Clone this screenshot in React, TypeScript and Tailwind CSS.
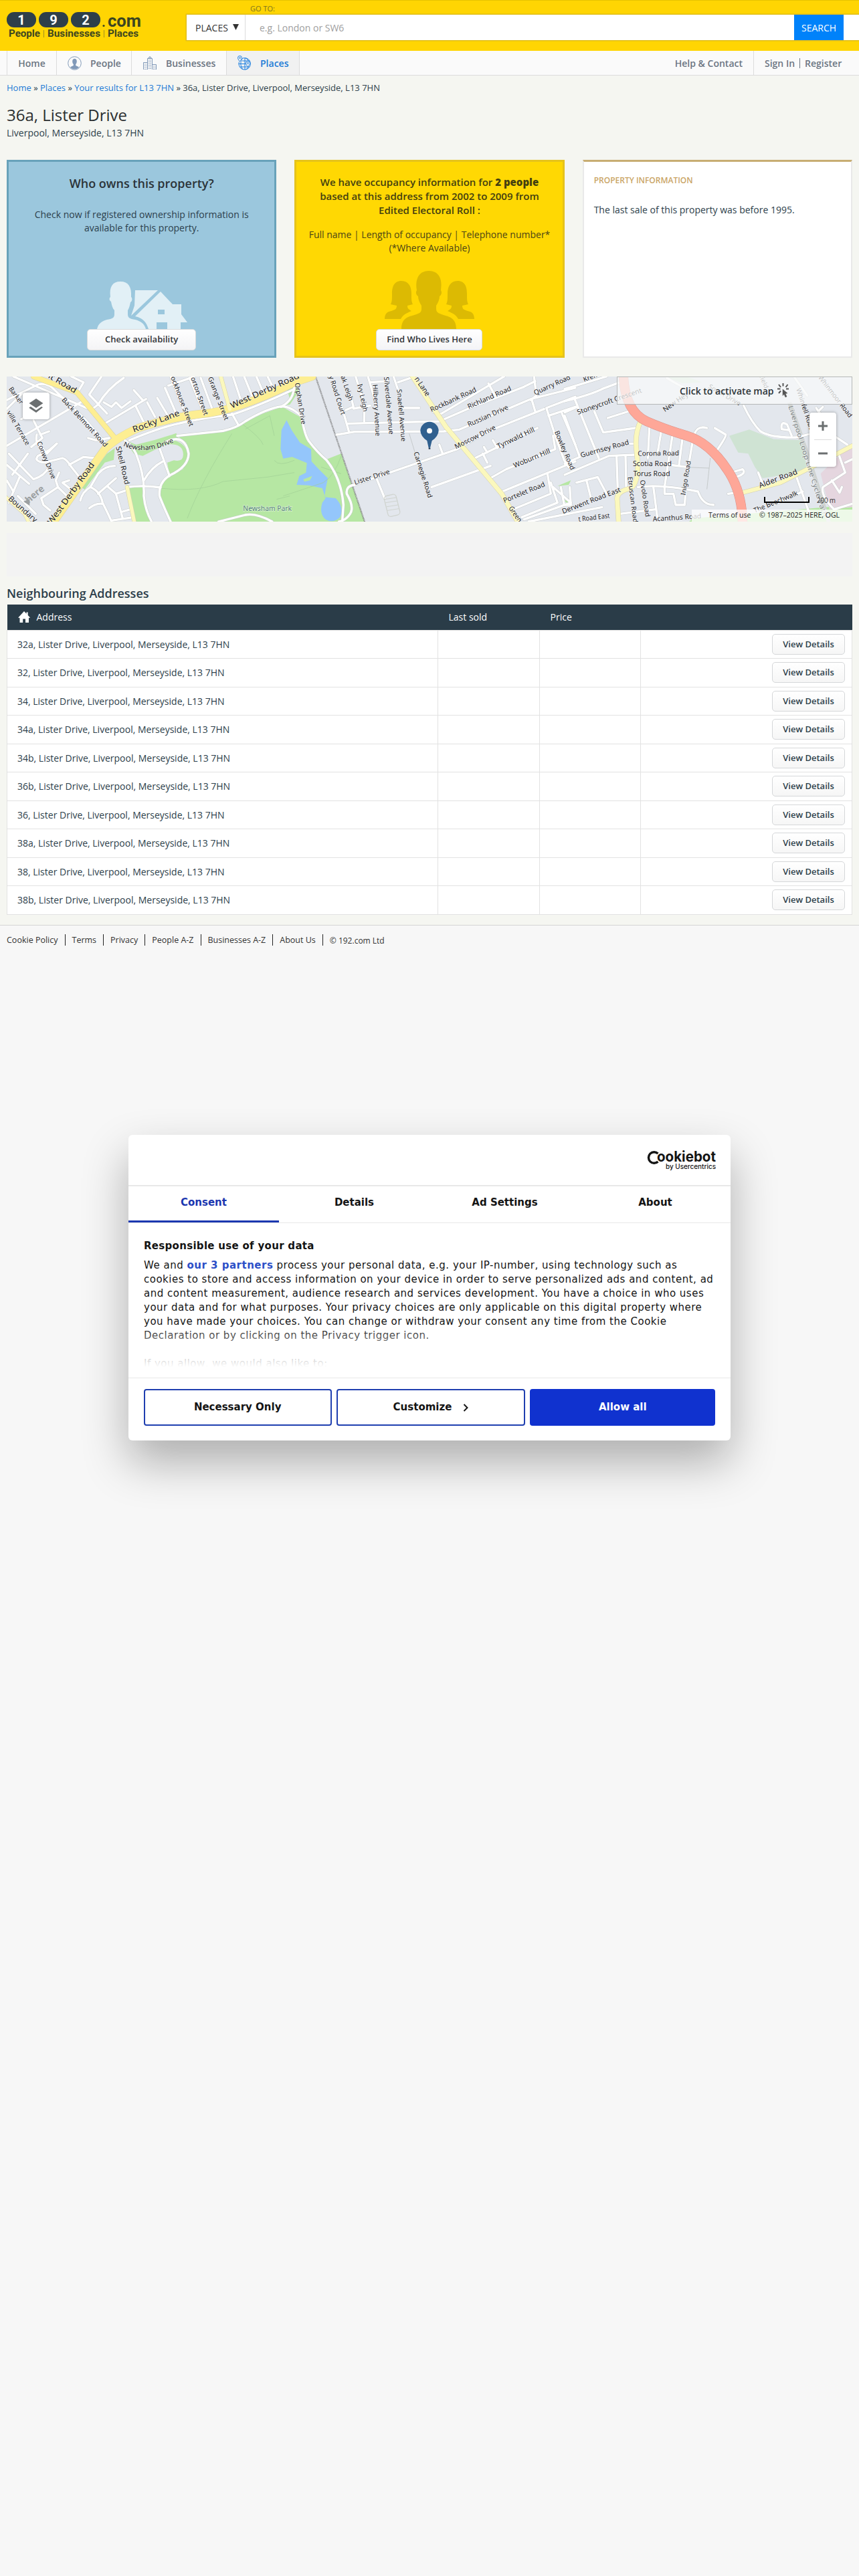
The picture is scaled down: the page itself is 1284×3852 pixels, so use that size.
import { ReactNode } from 'react'

const addresses = ['32a', '32', '34', '34a', '34b', '36b', '36', '38a', '38', '38b']

const footerLinks = ['Cookie Policy', 'Terms', 'Privacy', 'People A-Z', 'Businesses A-Z', 'About Us']

function Logo() {
  return (
    <div className="ml-[10px] mt-[17px] w-[205px] font-['Roboto'] font-bold">
      <div className="flex h-[24px] items-start">
        <div className="flex gap-[4px]">
          {['1', '9', '2'].map((n) => (
            <span key={n} className="flex h-[23px] w-[44px] items-center justify-center rounded-[11px] bg-[#2e3f4a] text-[20px] leading-none text-white">
              {n}
            </span>
          ))}
        </div>
        <svg width="62" height="30" className="ml-[2px] overflow-visible" fill="#3c4620">
          <circle cx="3" cy="20.500" r="1.600" />
          <text x="9" y="22" fontSize="25" textLength="50" lengthAdjust="spacingAndGlyphs">com</text>
        </svg>
      </div>
      <svg width="205" height="18" className="block overflow-visible" fontSize="14" fill="#3c4620">
        <text x="3" y="13" textLength="47" lengthAdjust="spacingAndGlyphs">People</text>
        <text x="61" y="13" textLength="79" lengthAdjust="spacingAndGlyphs">Businesses</text>
        <text x="151" y="13" textLength="46" lengthAdjust="spacingAndGlyphs">Places</text>
        <path d="M55.500 3v11M145.500 3v11" stroke="#a08f20" />
      </svg>
    </div>
  )
}

function Header() {
  return (
    <header className="flex h-[76px] overflow-hidden border-t border-[#e6c200] bg-[#ffd503] shadow-[0_1px_0_#cdb96a]">
      <Logo />
      <div className="ml-[64px] flex-1">
        <div className="ml-[95px] mt-[3px] text-[11px] leading-[18px] text-[#7c7222]">GO TO:</div>
        <div className="flex h-[38px] bg-white text-[15px] shadow-[0_0_0_1.5px_#e0bd1c]">
          <div className="flex w-[88px] items-center border-r border-[#dddddd] pl-[13px] text-[14px] text-[#333]">
            PLACES
            <svg width="9" height="10" className="ml-[7px]"><path d="M0 0h9L4.500 9z" fill="#333" /></svg>
          </div>
          <div className="flex flex-1 items-center pl-[21px] text-[14px] text-[#a0a0a0]">e.g. London or SW6</div>
          <button className="mr-[23px] w-[74px] bg-[#0082fa] text-[14px] text-white">SEARCH</button>
        </div>
      </div>
    </header>
  )
}

function PeopleIcon() {
  return (
    <svg width="21" height="21" viewBox="0 0 21 21" className="mr-[13px]">
      <circle cx="10.500" cy="10.500" r="9.800" fill="none" stroke="#8199b8" />
      <path d="M7.200 7.500c0-5 6.600-5 6.600 0 0 2-.7 3.800-1.600 4.600v2l4.800 2.200c-3 4.300-10 4.300-13 0l4.800-2.200v-2C7.800 11.300 7.200 9.500 7.200 7.500z" fill="#8199b8" />
    </svg>
  )
}

function BusinessIcon() {
  return (
    <svg width="21" height="21" viewBox="0 0 21 21" className="mr-[13px]" fill="none" stroke="#8199b8">
      <path d="M6.500 20V3.500h7V20M8 3.500v-1.500h4v1.500M10 2V0M.5 20V9.500h6M13.500 12.500h6V20" />
      <path d="M8 6h4M8 8.500h4M8 11h4M8 13.500h4M8 16h4M8 18.500h4M2 12h3.500M2 14.500h3.500M2 17h3.500M2 19.500h3.500M15 15h3.500M15 17.500h3.500M15 19.500h3.500" strokeDasharray="1.500 1" />
    </svg>
  )
}

function PlacesIcon() {
  return (
    <svg width="21" height="22" viewBox="0 0 21 22" className="mr-[13px]" fill="none" stroke="#1c7fe0">
      <path d="M7 4.500A8.700 8.700 0 1 1 2.500 9.500M7 4.800c-3 5-3 11 1 16M11 4v17M12 4c3 1 4 3 4.500 5M12.500 21c2-1 3-3 3.800-5M1.500 12.500h11M3.500 17h14.500M7 8h11" />
      <path d="M3.500 9C1.500 6.500.5 5 .5 3.500a3 3 0 0 1 6 0C6.500 5 5.500 6.500 3.500 9z" fill="#f1f1f1" />
      <circle cx="3.500" cy="3.500" r="1" />
      <path d="M15.500 17c-2-2.500-3-4-3-5.500a3 3 0 0 1 6 0c0 1.500-1 3-3 5.500z" fill="#f1f1f1" />
      <circle cx="15.500" cy="11.500" r="1" />
    </svg>
  )
}

function Nav() {
  return (
    <nav className="flex h-[37px] items-stretch border-b border-[#dcdcdc] bg-[#fafafa] pl-[10px] text-[14px] font-semibold text-[#6c7683]">
      <a className="flex w-[74px] items-center justify-center border-l border-[#dcdcdc]">Home</a>
      <a className="flex w-[112px] items-center border-l border-[#dcdcdc] pl-[16px]"><PeopleIcon />People</a>
      <a className="flex w-[142px] items-center border-l border-[#dcdcdc] pl-[17px]"><BusinessIcon />Businesses</a>
      <a className="flex w-[110px] items-center border-x border-[#dcdcdc] bg-[#f1f1f1] pl-[16px] text-[#1c7bd6]"><PlacesIcon />Places</a>
      <div className="ml-auto flex items-center pr-[16px]">Help &amp; Contact</div>
      <div className="flex w-[158px] items-center border-l border-[#dcdcdc] pl-[16px]">
        Sign In
        <span className="mx-[7px] h-[15px] w-px bg-[#6c7683]" />
        Register
      </div>
    </nav>
  )
}

function Breadcrumb() {
  return (
    <div className="mt-[9px] whitespace-nowrap text-[13px] font-medium leading-[18px] text-[#2c3e4a]">
      <a className="text-[#1c7bd6]">Home</a> <span className="font-normal">»</span> <a className="text-[#1c7bd6]">Places</a>{' '}
      <span className="font-normal">»</span> <a className="text-[#1c7bd6]">Your results for L13 7HN</a>{' '}
      <span className="font-normal">»</span> 36a, Lister Drive, Liverpool, Merseyside, L13 7HN
    </div>
  )
}

function CardButton({ children, className }: { children: ReactNode; className: string }) {
  return (
    <button className={`h-[32px] rounded-[5px] border border-[#d8dadb] bg-linear-to-b from-white to-[#f4f4f6] text-[13px] font-semibold text-[#303438] ${className}`}>
      {children}
    </button>
  )
}

function Cards() {
  return (
    <div className="mt-[31px] grid grid-cols-3 gap-[27px] text-[14px]">
      <section className="flex h-[296px] flex-col items-center border-[3px] border-[#68a2ba] bg-[#9bc7dd] pb-[8px] pt-[20px] text-center">
        <h2 className="text-[18px] font-semibold leading-[24px] text-[#2b3338]">Who owns this property?</h2>
        <p className="mt-[25px] px-[30px] leading-[20px] text-[#2c404c]">Check now if registered ownership information is<br />available for this property.</p>
        <svg width="136" height="71" viewBox="0 0 136 71" className="mt-auto ml-[2px]" fill="#e2f0f6">
          <path d="M0 71c2-9 8-12 15-14 8-1 11-3 11-8v-6c-3-3-4-8-5-13-3-2-3-5-1-7C18 8 23 0 35 0s17 8 16 23c2 2 2 6-1 8-1 5-2 9-4 12v6c0 5 3 7 11 8 8 2 14 6 16 14z" />
          <path d="M57 13h34L51 51l5-15z" />
          <path d="M95 15l18 19h13v15l9 12h-10v10h-20V61H89v10H77c-3-10-9-17-20-19z" />
          <path d="M91 42h10v7H91z" fill="#9bc7dd" />
        </svg>
        <CardButton className="w-[163px]">Check availability</CardButton>
      </section>
      <section className="flex h-[296px] flex-col items-center border-[3px] border-[#e6c31b] bg-[#ffd803] pb-[8px] pt-[20px] text-center text-[#4b4416]">
        <h2 className="whitespace-nowrap text-[15px] font-semibold leading-[21px] text-[#443f10]">
          We have occupancy information for <b className="font-extrabold">2 people</b><br />based at this address from 2002 to 2009 from<br />Edited Electoral Roll :
        </h2>
        <p className="mt-[16px] leading-[20px]">Full name | Length of occupancy | Telephone number*<br />(*Where Available)</p>
        <svg width="134" height="87" viewBox="0 0 134 87" className="mt-auto" fill="#dcba03">
          <path d="M25 87c0-14 8-18 16-20 10-3 14-4 14-10v-5c-3-5-5-9-5-14-3-2-4-6-2-9C45 11 52 0 66 0s21 11 18 29c2 3 1 7-2 9 0 5-2 9-5 14v5c0 6 5 7 14 10 8 2 16 6 16 20z" />
          <path d="M0 72c0-9 5-11 10-12 6-2 8-3 8-8l-9-2c2-4 2-7 2-16 0-10 3-19 14-19s15 9 15 19c0 9 0 12 2 16l-8 2c0 4 1 5 6 8-8 4-11 4-16 12z" />
          <path d="M134 72c0-9-5-11-10-12-6-2-8-3-8-8l9-2c-2-4-2-7-2-16 0-10-3-19-14-19S94 24 94 34c0 9 0 12-2 16l8 2c0 4-1 5-6 8 8 4 11 4 16 12z" />
        </svg>
        <CardButton className="w-[159px]">Find Who Lives Here</CardButton>
      </section>
      <section className="h-[296px] border-2 border-t-[3px] border-[#e9e9e9] border-t-[#c8ad72] bg-white px-[15px] pt-[19px]">
        <h2 className="text-[12px] font-semibold leading-[18px] text-[#caa566]">PROPERTY INFORMATION</h2>
        <p className="mt-[25px] leading-[20px] text-[#2c3e4a]">The last sale of this property was before 1995.</p>
      </section>
    </div>
  )
}

// The map is drawn in thirds of a pixel
const minorRoads = [
  // west
  'M30 130L170 60Q205 50 235 75L380 215L470 320', 'M30 335L370 135', 'M100 100L30 170', 'M95 215L150 190M150 220L190 300L140 340M180 285L220 270',
  'M60 24L400 170', 'M320 24L375 50L345 100', 'M555 30Q480 80 440 150L420 165', 'M455 24L400 105L480 190', 'M465 140L500 160L520 140L545 165L585 135',
  'M470 235L655 125M600 85L640 130', 'M610 160L645 230', 'M660 140L695 205', 'M705 120L750 195', 'M740 75L790 190', 'M755 65L870 25',
  'M765 24L830 190', 'M850 30L910 180', 'M900 30L950 165', 'M1045 24L1080 130', 'M1095 24L1130 110', 'M1150 24L1180 95', 'M1200 24L1225 75',
  'M30 420L130 505M125 370L55 465M40 370L150 485Q200 470 220 430M60 540L90 470', 'M165 285Q155 330 190 345L210 370L255 325', 'M255 325L220 355L170 380Q150 405 200 410L280 390Q300 395 320 430L360 480',
  'M310 420L375 385L425 390', 'M265 455L250 490L260 520L185 570L195 600L225 625', 'M260 520L300 560M310 490L280 500L330 540', 'M80 560L160 640M30 490L60 540L40 590',
  'M515 425Q470 425 440 460L405 520Q370 540 360 580', 'M405 520Q450 540 460 590Q490 650 500 675', 'M520 480L440 550M480 515L520 550L565 535M520 550L550 660M460 595Q430 590 400 615M500 670L600 655M550 630L585 620',
  'M570 520Q640 510 720 522', 'M645 490Q680 430 730 405', 'M715 345L760 470', 'M560 310Q590 330 610 370Q650 470 645 560Q650 620 680 675', 'M395 300L430 310L490 300',
  // round the park
  'M580 310Q700 260 780 240Q900 210 1040 195Q1150 160 1320 80', 'M795 290L1000 268Q1060 255 1100 225Q1200 165 1265 158Q1310 160 1360 210', 'M1040 190L1070 243',
  'M750 315Q830 280 846 370Q845 430 760 468Q710 500 715 560Q730 600 765 675', 'M980 675L1100 645Q1150 635 1220 675', 'M1260 160Q1320 130 1320 60',
  'M1355 220Q1370 300 1390 320Q1420 360 1465 400Q1530 480 1540 600L1535 670', 'M1590 510Q1550 515 1555 550Q1590 610 1570 640Q1550 670 1520 675',
  // centre
  'M1590 510L2050 350L2200 265L2440 170', 'M1510 285L1590 272L1990 270L2060 262L2380 125L2580 75', 'M1560 235L1970 225L2120 160L2350 70L2400 45', 'M1940 180Q1960 195 1980 190L2260 24', 'M2190 55L2220 110',
  'M1530 150L1565 272', 'M1570 100L1585 160L1550 175M1585 168L1660 155', 'M1595 24L1635 160L1633 225', 'M1650 24L1690 160', 'M1765 24L1790 100M1740 45L1660 50M1785 50L1860 24', 'M1800 165L1880 165',
  'M1690 485L1725 570', 'M1935 520L2200 425', 'M2130 390L2410 255M2165 370L2185 410M2170 340L2185 365M2210 310L2230 345', 'M2190 485L2270 440L2490 350L2480 290', 'M2240 545L2580 405', 'M2300 620L2470 550L2455 460',
  'M2340 655L2500 590L2470 500M2350 665L2560 590L2480 520M2370 675L2700 610', 'M2450 165L2580 115M2450 165L2490 290L2530 400L2550 430', 'M2385 130L2400 180M2395 24L2405 110L2380 130', 'M2460 200L2580 160M2520 190L2580 330', 'M2515 520L2530 600L2560 600L2555 520',
  'M1985 370L1970 330',
  // east
  'M2532 80L2720 24', 'M2532 135Q2650 105 2700 80L2780 50', 'M2575 120L2685 390', 'M2665 180L2705 275L2850 255', 'M2532 185L2590 160M2532 200L2600 385', 'M2725 210L2820 180', 'M2532 465L2730 380L2850 375',
  'M2532 415L2600 385', 'M2825 325L2850 325', 'M2912 255L2905 390', 'M2965 270L2950 360', 'M3015 290L2980 520', 'M3060 305L3045 420', 'M3105 320L3080 470', 'M2765 380L2770 530', 'M2805 380L2808 530', 'M3000 420L3080 430',
  'M2585 500L2680 475L2720 550M2630 490L2650 570', 'M2860 520Q2960 505 3130 540Q3150 600 3200 600', 'M2930 520L2950 675', 'M2980 520L2980 550L3020 550L3030 600L3070 600L3075 540', 'M2780 640L2940 620', 'M3110 300Q3120 240 3170 255', 'M3205 255L3255 285Q3260 290 3215 355',
  'M3335 155Q3370 230 3410 270Q3460 300 3570 297L3660 275', 'M3550 290L3530 240Q3500 220 3505 260L3540 265', 'M2990 30Q3050 70 3120 95', 'M3265 550L3340 540M3400 455L3420 505', 'M3295 450L3330 440Q3350 460 3300 475', 'M3570 470L3630 640', 'M3470 600L3600 540', 'M3660 165L3700 230', 'M3740 290L3800 330M3760 370L3790 455L3690 520Q3680 560 3740 620L3822 595M3790 410L3822 395M3730 490L3765 545L3775 520',
  'M3690 160L3670 180L3720 240M3560 24L3620 110',
]

const parkPaths = [
  'M720 525Q900 545 1000 495L1200 475L1320 455M840 660Q900 500 1040 280M1090 240Q1170 300 1180 330M1100 260L1210 200L1230 290M1230 400Q1250 430 1320 400',
  'M1270 560L1450 500Q1500 470 1530 380M1440 430L1530 460M1240 575L1300 560',
]

const yellowRoads = [
  ['M150 24L345 95L515 300', 22],
  ['M230 690L470 350Q520 300 620 255Q780 205 900 192Q1060 180 1320 50L1400 24', 34],
  ['M570 520L605 690', 16],
  ['M990 24L1030 170', 16],
  ['M1850 24L2000 250L2250 550L2330 690', 20],
  ['M2875 220Q2850 270 2852 330L2860 420Q2860 500 2830 525Q2760 540 2768 580L2775 690', 20],
  ['M3330 545L3500 500L3640 430L3822 335', 18],
  ['M20 560L110 640L130 680', 14],
] as const

const labels: [string, number, number, number, number, number][] = [
  ['nt Road', 200, 20, 335, 100, 36], ['Barker', 38, 80, 90, 150, 30], ['ville Terrace', 30, 185, 118, 335, 30], ['Back Belmont Road', 275, 130, 470, 342, 30],
  ['Conwy Drive', 165, 320, 232, 485, 30], ['Boundary', 35, 575, 155, 680, 34], ['West Derby Road', 232, 690, 425, 420, 38], ['Rocky Lane', 600, 275, 808, 198, 38],
  ['West Derby Road', 1040, 168, 1345, 30, 38], ['Sheil Road', 520, 340, 560, 510, 32], ['ockhouse Street', 765, 28, 850, 250, 30],
  ['orton Street', 855, 30, 915, 200, 30], ['Grange Street', 932, 30, 1008, 222, 30], ['Orphan Drive', 1322, 54, 1352, 240, 30], ['y Road Court', 1475, 24, 1530, 198, 30],
  ['ak Leigh', 1528, 24, 1565, 135, 30], ['Ivy Leigh', 1603, 60, 1630, 183, 30], ['Hilberry Avenue', 1672, 60, 1685, 292, 30], ['Silverdale Avenue', 1722, 26, 1745, 285, 30],
  ['Snaefell Avenue', 1780, 82, 1800, 316, 30], ['n Lane', 1858, 35, 1912, 115, 34], ['Rockbank Road', 1935, 184, 2138, 90, 31], ['Richland Road', 2102, 170, 2295, 85, 31],
  ['Russian Drive', 2102, 250, 2282, 170, 31], ['Moscow Drive', 2045, 350, 2225, 260, 31], ['Quarry Road', 2400, 108, 2560, 35, 31], ['Tynwald Hill', 2235, 348, 2400, 270, 31],
  ['Woburn Hill', 2308, 434, 2470, 366, 31], ['Portelet Road', 2262, 592, 2446, 515, 31], ['Lister Drive', 1592, 510, 1750, 460, 31], ['Carnegie Road', 1855, 365, 1920, 570, 30],
  ['Bowley Road', 2486, 272, 2560, 445, 30], ['Green', 2280, 615, 2325, 680, 32], ['Kremlin', 2620, 48, 2720, 10, 30],
  ['Stoneycroft Crescent', 2592, 195, 2880, 95, 31], ['New Hey', 2982, 184, 3088, 110, 31], ['Guernsey Road', 2606, 388, 2822, 328, 31], ['Corona Road', 2860, 380, 3045, 378, 31],
  ['Scotia Road', 2838, 427, 3012, 427, 31], ['Torus Road', 2840, 472, 3005, 472, 31], ['Inigo Road', 3073, 558, 3098, 404, 29], ['Etruscan Road', 2815, 475, 2840, 680, 29],
  ['Ovolo Road', 2870, 490, 2895, 655, 30], ['Derwent Road East', 2525, 640, 2785, 540, 31], ['t Road East', 2595, 675, 2735, 658, 31], ['Acanthus Road', 2928, 674, 3145, 660, 31],
  ['Alder Road', 3408, 525, 3578, 460, 34], ['The Beechwalk', 3385, 636, 3580, 555, 30], ['South Drive', 3175, 75, 3315, 155, 29], ['field', 3405, 24, 3430, 80, 28],
  ['Whinfell Road', 3570, 80, 3632, 270, 30], ['Whinmoor Road', 3668, 30, 3808, 210, 30],
]

function Label({ item }: { item: [string, number, number, number, number, number] }) {
  const [text, x1, y1, x2, y2, size] = item
  const angle = (Math.atan2(y2 - y1, x2 - x1) * 180) / Math.PI
  return (
    <text
      transform={`translate(${x1} ${y1}) rotate(${angle})`}
      fontSize={size}
      textLength={Math.hypot(x2 - x1, y2 - y1)}
      lengthAdjust="spacingAndGlyphs"
    >
      {text}
    </text>
  )
}

function MapDrawing() {
  return (
    <svg className="block h-[217px] w-full" viewBox="30 24 3792 651" preserveAspectRatio="none">
      <rect x="30" y="24" width="3792" height="651" fill="#e3e7ed" />
      <g fill="#b6e7a3">
        <path d="M795 290L1000 268L1070 243L1180 190L1265 160L1345 205L1390 320L1465 395L1530 370L1640 690H765L715 560L725 505L760 470L820 440L848 380L835 320z" />
        <path d="M560 310L610 330Q700 310 790 278L800 300L640 380L600 370z" />
        <path d="M780 310Q850 330 840 400Q810 450 760 465L750 410L780 400Q830 410 820 360Q810 320 740 330z" />
        <path d="M515 345L510 398L470 410L380 530L360 520L480 370z" />
        <path d="M580 520H645Q645 610 685 690H605z" />
        <path d="M1285 75L1320 58L1340 90L1300 150L1262 156L1300 125z" />
        <path d="M2500 515L2560 490L2550 510zM2530 580H2560V610z" />
        <path d="M3110 660L3822 600V675H3090z" />
        <path d="M2980 24H3080L3150 50L3060 55z" fill="#d3e6d4" />
      </g>
      <path d="M3270 290L3360 262L3470 305L3600 310L3620 450L3420 480L3385 430L3355 370L3310 365z" fill="#cfe3d3" />
      <path d="M3680 460L3760 380L3822 330V610L3720 620z" fill="#e5d6df" />
      <path d="M1285 220L1308 265L1345 320L1395 350L1397 405L1430 440L1470 480L1462 520L1455 565L1505 570Q1545 610 1525 655Q1495 685 1460 665Q1430 640 1445 590L1460 570L1445 525L1385 512L1330 510L1342 470L1372 455L1376 412L1310 385L1270 392L1258 350L1262 265z" fill="#94c6fb" />
      <path d="M1360 485L1400 470L1390 490L1365 496z" fill="#b6e7a3" />
      <g fill="none" stroke="#a0cf95" strokeWidth="2">
        {parkPaths.map((d) => <path key={d} d={d} />)}
      </g>
      <path d="M1415 24L1640 690" stroke="#777" strokeWidth="7" strokeDasharray="3 3" />
      <path d="M1835 280L1920 560M3185 390L3170 530M3055 430L3180 435" stroke="#b6bbb9" strokeWidth="2" fill="none" />
      <path d="M3540 140Q3640 420 3720 690" stroke="#cfd3d1" strokeWidth="18" fill="none" />
      <g fill="none" strokeLinecap="round" strokeLinejoin="round">
        <g stroke="#c6caca" strokeWidth="13">{minorRoads.map((d) => <path key={d} d={d} />)}</g>
        <g stroke="#ffffff" strokeWidth="10">{minorRoads.map((d) => <path key={d} d={d} />)}</g>
        <g stroke="#d3cfae">{yellowRoads.map(([d, w]) => <path key={d} d={d} strokeWidth={w + 3} />)}</g>
        <g>{yellowRoads.map(([d, w]) => <path key={d} d={d} strokeWidth={w} stroke={w === 34 || w === 22 ? '#fdee92' : '#fbf8bd'} />)}</g>
        <path d="M2795 10Q2800 180 2900 225Q2980 260 3080 290Q3180 320 3260 440Q3330 540 3330 690" stroke="#d98f86" strokeWidth="43" />
        <path d="M2795 10Q2800 180 2900 225Q2980 260 3080 290Q3180 320 3260 440Q3330 540 3330 690" stroke="#fea798" strokeWidth="40" />
        <rect x="1730" y="555" width="55" height="95" rx="14" stroke="#d0d4d0" strokeWidth="4" transform="rotate(-14 1757 600)" />
        <path d="M1725 575l52-8M1730 590l52-8M1735 608l50-8M1738 625l50-8" stroke="#d0d4d0" strokeWidth="3" />
      </g>
      <g fill="#1c2226" className="font-['Noto_Sans']" stroke="#ffffff" strokeOpacity="0.5" strokeWidth="4" paintOrder="stroke">
        {labels.map((item) => <Label key={item[0] + item[1]} item={item} />)}
        <path id="newsham-drive" d="M552 335Q650 380 780 318" fill="none" stroke="none" />
        <text fontSize="30" textLength="236" lengthAdjust="spacingAndGlyphs"><textPath href="#newsham-drive">Newsham Drive</textPath></text>
        <g fill="#7d8385"><Label item={['Liverpool Loop Line Cycle Path', 3535, 158, 3690, 655, 30]} /></g>
        <g fill="#56827c"><Label item={['Newsham Park', 1090, 627, 1308, 627, 31]} /></g>
      </g>
      <g fill="#9b9fa1"><text transform="translate(128 594) rotate(-40)" fontSize="42" fontWeight="bold" className="font-['Open_Sans']">here</text><path d="M105 585l28-12v30z" /></g>
      <g>
        <path d="M1885 268a41 41 0 1 1 82 0q-2 26-30 44l-8 32h-7l-7-32q-28-18-30-44z" fill="#30608f" />
        <circle cx="1926" cy="268" r="12" fill="#fff" />
        <path d="M1922 344h8v6h-8z" fill="#1b3350" />
      </g>
    </svg>
  )
}

function MapPanel() {
  return (
    <div className="relative mt-[28px] h-[217px] overflow-hidden">
      <MapDrawing />
      {/* Layers */}
      <div className="absolute left-[24px] top-[24px] flex h-[40px] w-[40px] items-center justify-center rounded-[4px] bg-white shadow-[0_0_4px_rgba(0,0,0,0.35)]">
        <svg width="22" height="22" viewBox="0 0 22 22" fill="#6b6f70"><path d="M11 0l10.500 7L11 14 .5 7z" /><path d="M1 13l2-1 8 5.500 8-5.500 2 1.200L11 21 .5 14z" /></svg>
      </div>
      {/* Activate bar */}
      <div className="absolute right-0 top-0 flex h-[42px] w-[352px] items-center border border-[#b5b8b8] bg-[#f8faf9]/75 pl-[93px] text-[14px] font-semibold text-[#2c3438]">
        <span className="w-[140px] whitespace-nowrap">Click to activate map</span>
        <svg width="18" height="22" viewBox="0 0 18 22" className="ml-[6px]" stroke="#555" strokeWidth="2" fill="#555">
          <path d="M8.500 0v4.500M2 2l3 4M15.500 2l-3 4M0 8.500h4.500M13 8.500h4M2 15l3-3.500" fill="none" />
          <path d="M8 9l7 6-3 .5 2 4.500-2 1-2-4.500-2 2z" strokeWidth="0.500" />
        </svg>
      </div>
      {/* Zoom */}
      <div className="absolute right-[24px] top-[54px] h-[81px] w-[40px] rounded-[4px] bg-white shadow-[0_0_4px_rgba(0,0,0,0.35)]">
        <svg width="40" height="81"><path d="M13 20h14M20 13v14M13 61h14" stroke="#6b6f70" strokeWidth="3" /><path d="M7 40.500h26" stroke="#ddd" /></svg>
      </div>
      {/* Scale */}
      <svg width="112" height="20" className="absolute bottom-[20px] right-[21px]">
        <path d="M2 3v8h66V3" fill="none" stroke="#000" strokeWidth="2" />
        <text x="80" y="12" fontSize="11" textLength="28" lengthAdjust="spacingAndGlyphs" fill="#333">200 m</text>
      </svg>
      <div className="absolute bottom-0 right-0 flex h-[18px] w-[240px] items-center bg-white/75 pl-[25px] text-[10.500px] text-[#222]">
        <span className="w-[76px] whitespace-nowrap">Terms of use</span>
        <span className="whitespace-nowrap">© 1987–2025 HERE, OGL</span>
      </div>
    </div>
  )
}

function AddressTable() {
  return (
    <table className="mt-[5px] w-[1264px] table-fixed border-collapse text-[14px] text-[#2c3e4a]">
      <colgroup>
        <col className="w-[644px]" />
        <col className="w-[152px]" />
        <col className="w-[151px]" />
        <col />
      </colgroup>
      <thead>
        <tr className="h-[38px] bg-[#2a3c48] text-left text-[14px] text-white">
          <th className="pl-[16px] font-medium">
            <span className="flex items-center">
              <svg width="18" height="17" viewBox="0 0 18 17" className="mr-[10px]" fill="#fff"><path d="M9 0l3.500 3.700V1.500h2.200v4.600L18 9.500l-1 .8-1-.9V17h-5v-5.500H7.200V17H2.500V9.400l-1 .9-1.200-.8z" /></svg>
              Address
            </span>
          </th>
          <th className="pl-[16px] font-medium">Last sold</th>
          <th className="pl-[16px] font-medium">Price</th>
          <th />
        </tr>
      </thead>
      <tbody>
        {addresses.map((n) => (
          <tr key={n} className="h-[42.500px] bg-white">
            <td className="border border-[#e2e2e2] pl-[15px]">{n}, Lister Drive, Liverpool, Merseyside, L13 7HN</td>
            <td className="border border-[#e2e2e2]" />
            <td className="border border-[#e2e2e2]" />
            <td className="border border-[#e2e2e2] pr-[10px] text-right">
              <button className="h-[31px] w-[109px] rounded-[5px] border border-[#d5d7d9] bg-linear-to-b from-white to-[#f6f6f6] text-[13px] font-semibold text-[#2c3e4a]">View Details</button>
            </td>
          </tr>
        ))}
      </tbody>
    </table>
  )
}

function Footer() {
  return (
    <footer className="mt-[15px] flex h-[2470px] items-start border-t border-[#d4d4d4] bg-[#f7f7f7] pl-[10px] pt-[13px] text-[12.500px] leading-[18px] text-[#333]">
      {footerLinks.map((link) => (
        <span key={link} className="mr-[10px] border-r border-[#222] pr-[10px] leading-[17px]">{link}</span>
      ))}
      <span className="pt-px text-[12px]">© 192.com Ltd</span>
    </footer>
  )
}

function CookieDialog() {
  return (
    <div className="absolute inset-0 flex items-center justify-center font-['DejaVu_Sans'] text-[#141414]">
      <div className="-mt-px flex h-[457px] w-[900px] flex-col rounded-[6px] bg-white shadow-[0_32px_68px_rgba(0,0,0,0.3)]">
        <div className="flex h-[77px] justify-end border-b-2 border-[#e8e8e8] pr-[22px] pt-[22px]">
          <svg width="103" height="34" fill="#141414">
            <path d="M16.500 6A8.300 8.300 0 1 0 16.500 18" fill="none" stroke="#141414" strokeWidth="3.400" />
            <text x="15" y="18" fontSize="21" fontWeight="700" textLength="88" lengthAdjust="spacingAndGlyphs" className="font-['Inter']">ookiebot</text>
            <text x="28" y="29" fontSize="10" fontWeight="500" textLength="75" lengthAdjust="spacingAndGlyphs" className="font-['Inter']">by Usercentrics</text>
          </svg>
        </div>
        <div className="flex h-[55px] border-b border-[#e8e8e8] text-[15px] font-bold">
          <div className="flex w-[225px] items-center justify-center border-b-[3px] border-[#1b37b0] pb-[2px] text-[#1b37b0]">Consent</div>
          <div className="flex w-[225px] items-center justify-center pb-[5px]">Details</div>
          <div className="flex w-[225px] items-center justify-center pb-[5px]">Ad Settings</div>
          <div className="flex w-[225px] items-center justify-center pb-[5px]">About</div>
        </div>
        <div className="relative h-[231px] overflow-hidden px-[23px] pt-[24px]">
          <h2 className="text-[15px] font-bold leading-[21px] tracking-[0.300px]">Responsible use of your data</h2>
          <p className="mt-[8px] whitespace-nowrap text-[15px] leading-[21px] tracking-[0.500px]">
            We and <b className="text-[#2c50c8]">our 3 partners</b> process your personal data, e.g. your IP-number, using technology such as<br />
            cookies to store and access information on your device in order to serve personalized ads and content, ad<br />
            and content measurement, audience research and services development. You have a choice in who uses<br />
            your data and for what purposes. Your privacy choices are only applicable on this digital property where<br />
            you have made your choices. You can change or withdraw your consent any time from the Cookie<br />
            Declaration or by clicking on the Privacy trigger icon.<br />
            <br />
            If you allow, we would also like to:
          </p>
          <div className="absolute inset-x-0 bottom-0 h-[79px] bg-linear-to-b from-white/0 to-white to-80%" />
        </div>
        <div className="flex flex-1 gap-[7.500px] border-t border-[#e8e8e8] px-[22.500px] pt-[16px] text-[15px] font-bold">
          <button className="h-[55px] flex-1 rounded-[4px] border-2 border-[#1f3fb0] pb-px">Necessary Only</button>
          <button className="flex h-[55px] flex-1 items-center justify-center rounded-[4px] border-2 border-[#1f3fb0] pb-px">
            Customize
            <svg width="8" height="12" viewBox="0 0 8 12" className="ml-[17px] mt-px"><path d="M1.500 1l5 5-5 5" fill="none" stroke="#141414" strokeWidth="2" /></svg>
          </button>
          <button className="h-[55px] flex-1 rounded-[4px] bg-[#1032cf] pb-px text-white">Allow all</button>
        </div>
      </div>
    </div>
  )
}

export default function App() {
  return (
    <div className="relative h-[3852px] w-[1284px] overflow-hidden bg-[#f5f6f1] font-['Open_Sans',sans-serif]">
      <Header />
      <Nav />
      <main className="px-[10px]">
        <Breadcrumb />
        <h1 className="mt-[15px] text-[24px] font-medium leading-[34px] text-[#2b2f30]">36a, Lister Drive</h1>
        <p className="mt-px text-[14px] leading-[18px] text-[#2c3e4a]">Liverpool, Merseyside, L13 7HN</p>
        <Cards />
        <MapPanel />
        <div className="mt-[17px] h-[65px] bg-[#f3f3f3]" />
        <h2 className="mt-[13px] text-[18px] font-semibold leading-[24px] text-[#2c3e4a]">Neighbouring Addresses</h2>
        <AddressTable />
      </main>
      <Footer />
      <CookieDialog />
    </div>
  )
}
